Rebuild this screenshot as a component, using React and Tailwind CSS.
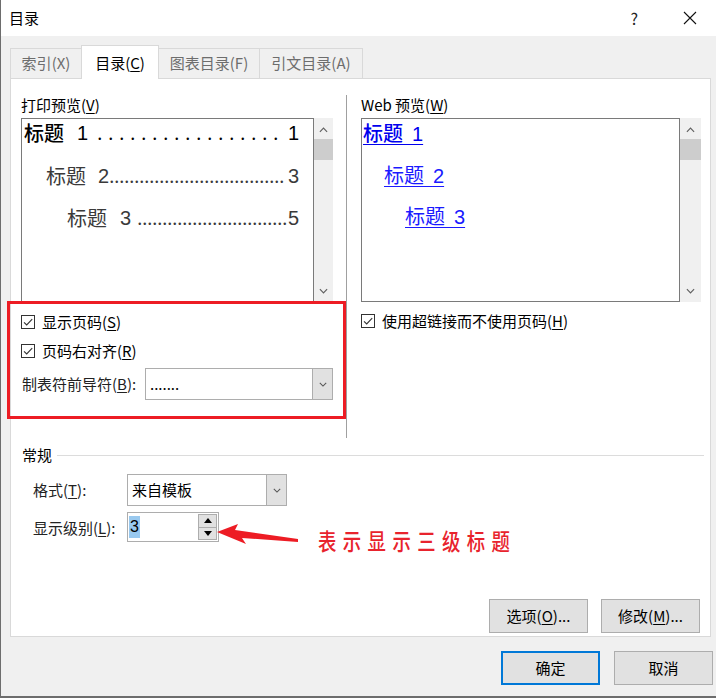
import React from 'react';

const ui = "font-['Microsoft_YaHei_UI','Noto_Sans_CJK_SC',sans-serif]";

function Check() {
    return (
        <span className="flex h-[14px] w-[14px] shrink-0 items-center justify-center border border-[#333] bg-white">
            <svg width="12" height="12" viewBox="0 0 12 12">
                <path d="M2 6.3 L4.7 9 L10.2 3.2" fill="none" stroke="#333" strokeWidth="1.1" />
            </svg>
        </span>
    );
}

function Chevron({ down, size = 9, color = '#606060' }) {
    return (
        <svg width={size} height={Math.round(size / 2) + 1} viewBox="0 0 10 6">
            <path d={down ? 'M1 1 L5 5 L9 1' : 'M1 5 L5 1 L9 5'} fill="none" stroke={color} strokeWidth="1.3" />
        </svg>
    );
}

function ScrollBar({ width }) {
    return (
        <div className={`flex h-[184px] ${width} flex-col items-center bg-[#f0f0f0]`}>
            <div className="flex h-[21px] items-center justify-center pt-[2px]">
                <Chevron />
            </div>
            <div className="h-[21px] w-full bg-[#cdcdcd]" />
            <div className="flex-1" />
            <div className="flex h-[21px] items-center justify-center pb-[1px]">
                <Chevron down />
            </div>
        </div>
    );
}

function Key({ children }) {
    return <span className="underline underline-offset-2">{children}</span>;
}

function Tab({ label, k, active, w }) {
    return active ? (
        <div className={`z-10 -mb-px flex h-[34px] ${w} items-center justify-center border border-b-0 border-[#d9d9d9] bg-white pt-[2px] text-[15px] text-black`}>
            {label}(<Key>{k}</Key>)
        </div>
    ) : (
        <div className={`-ml-px flex h-[30px] ${w} items-center justify-center border border-b-0 border-[#d9d9d9] bg-[#f0f0f0] text-[15px] text-[#6d6d6d] first:ml-0`}>
            {label}({k})
        </div>
    );
}

function Dropdown({ text, w }) {
    return (
        <div className={`flex h-[32px] ${w} border border-[#adadad] bg-white`}>
            <div className="flex flex-1 items-center pl-[4px] text-[15px] text-black">{text}</div>
            <div className="flex w-[20px] items-center justify-center border-l border-[#adadad] bg-[#e1e1e1]">
                <Chevron down size={8} color="#555" />
            </div>
        </div>
    );
}

function Btn({ children, primary }) {
    return (
        <button
            className={`flex h-[34px] w-[99px] items-center justify-center bg-[#e1e1e1] text-[15px] text-black ${
                primary ? 'border-2 border-[#0078d7]' : 'border border-[#adadad]'
            }`}
        >
            {children}
        </button>
    );
}

function TocRow({ pad, num, page, dots, bold, gap, dotsClass = '' }) {
    return (
        <div className={`flex h-[28px] items-center ${pad} pr-[14px] text-[20px] leading-[28px] ${bold ? 'text-black font-medium' : 'text-[#3a3a3a]'}`}>
            <span>标题</span>
            <span className={`${gap} font-['Liberation_Sans',sans-serif]`}>{num}</span>
            <span className={`whitespace-pre font-['Liberation_Serif',serif] ${dotsClass}`}>{dots}</span>
            <span className="flex-1" />
            <span className="font-['Liberation_Sans',sans-serif]">{page}</span>
        </div>
    );
}

function WebRow({ pad, num, bold }) {
    return (
        <div className={`flex h-[28px] items-center ${pad} text-[20px] leading-[28px]`}>
            <span className={`underline decoration-1 underline-offset-[3px] ${bold ? 'text-[#0000ee] font-medium' : 'text-[#1a1aff]'}`}>
                标题{'\u00a0\u00a0'}
                <span className="font-['Liberation_Sans',sans-serif]">{num}</span>
            </span>
        </div>
    );
}

export default function App() {
    return (
        <div className={`relative flex h-[698px] w-[716px] flex-col overflow-hidden border-b-2 border-l border-[#6d6d6d] bg-[#f0f0f0] ${ui}`}>
            {/* Title bar */}
            <div className="flex h-9 shrink-0 items-center bg-white pl-[8px] text-[15px] text-black">
                <span>目录</span>
                <span className="ml-auto mr-[45px] text-[16px] text-[#222]">?</span>
                <svg width="14" height="14" viewBox="0 0 14 14" className="mr-[19px]">
                    <path d="M1 1 L13 13 M13 1 L1 13" stroke="#111" strokeWidth="1.1" />
                </svg>
            </div>

            {/* Tabs */}
            <div className="flex h-[42px] shrink-0 items-end pl-[9px]">
                <Tab label="索引" k="X" w="w-[72px]" />
                <Tab label="目录" k="C" active w="w-[78px] -ml-px" />
                <Tab label="图表目录" k="F" w="w-[102px]" />
                <Tab label="引文目录" k="A" w="w-[104px]" />
            </div>

            {/* Panel */}
            <div className="ml-[9px] flex h-[559px] w-[701px] shrink-0 flex-col border border-[#d9d9d9] bg-white">
                <div className="flex h-[359px]">
                    {/* Print preview */}
                    <div className="w-[335px] pl-[10px] pt-[16px]">
                        <div className="h-5 text-[15px] leading-5 text-black">
                            打印预览(<Key>V</Key>)
                        </div>
                        <div className="mt-[3px] flex">
                            <div className="h-[184px] w-[293px] border border-[#7a7a7a] bg-white">
                                <TocRow
                                    pad="pl-[2px]"
                                    num="1"
                                    page="1"
                                    gap="ml-[13px] mr-[9px]"
                                    bold
                                    dotsClass="tracking-[0.5px] font-normal"
                                    dots={'. '.repeat(17)}
                                />
                                <div className="mt-[15px]">
                                    <TocRow pad="pl-[24px]" num="2" page="3" gap="ml-[12px]" dots={'.'.repeat(35)} />
                                </div>
                                <div className="mt-[14px]">
                                    <TocRow pad="pl-[45px]" num="3" page="5" gap="ml-[13px] mr-[6px]" dots={'.'.repeat(30)} />
                                </div>
                            </div>
                            <ScrollBar width="w-[19px]" />
                        </div>
                        <div className="mt-[10px] flex h-5 items-center gap-[7px] text-[15px] text-black">
                            <Check />
                            <span>
                                显示页码(<Key>S</Key>)
                            </span>
                        </div>
                        <div className="mt-[9px] flex h-5 items-center gap-[7px] text-[15px] text-black">
                            <Check />
                            <span>
                                页码右对齐(<Key>R</Key>)
                            </span>
                        </div>
                        <div className="mt-[7px] flex items-center text-[15px] text-[#222]">
                            <span className="w-[124px] pl-px">
                                制表符前导符(<Key>B</Key>):
                            </span>
                            <Dropdown text="......." w="w-[188px]" />
                        </div>
                    </div>

                    <div className="mt-[16px] h-[343px] w-px bg-[#a0a0a0]" />

                    {/* Web preview */}
                    <div className="pl-[14px] pt-[16px]">
                        <div className="h-5 text-[15px] leading-5 text-black">
                            Web 预览(<Key>W</Key>)
                        </div>
                        <div className="mt-[3px] flex">
                            <div className="h-[184px] w-[319px] border border-[#7a7a7a] bg-white">
                                <WebRow pad="pl-[1px]" num="1" bold />
                                <div className="mt-[14px]">
                                    <WebRow pad="pl-[22px]" num="2" />
                                </div>
                                <div className="mt-[13px]">
                                    <WebRow pad="pl-[43px]" num="3" />
                                </div>
                            </div>
                            <ScrollBar width="w-[21px]" />
                        </div>
                        <div className="mt-[9px] flex h-5 items-center gap-[7px] text-[15px] text-black">
                            <Check />
                            <span>
                                使用超链接而不使用页码(<Key>H</Key>)
                            </span>
                        </div>
                    </div>
                </div>

                {/* General */}
                <div className="mt-[7px] flex h-5 items-center pl-[11px] pr-[6px] text-[15px] text-black">
                    <span>常规</span>
                    <div className="ml-[5px] h-px flex-1 bg-[#dcdcdc]" />
                </div>
                <div className="mt-[9px] flex items-center pl-[22px] text-[15px] text-[#222]">
                    <span className="w-[94px]">
                        格式(<Key>T</Key>):
                    </span>
                    <Dropdown text="来自模板" w="w-[160px]" />
                </div>
                <div className="mt-[6px] flex items-start pl-[22px] text-[15px] text-[#222]">
                    <span className="mt-[5px] w-[94px]">
                        显示级别(<Key>L</Key>):
                    </span>
                    <div className="flex h-[30px] w-[92px] items-center border border-[#adadad] bg-white pl-[1px] pr-[1px]">
                        <span className="flex h-[22px] w-[11px] items-center justify-center bg-[#99c9ef] font-['Liberation_Sans',sans-serif] text-[16px] text-black">
                            3
                        </span>
                        <div className="ml-auto flex h-[26px] w-[19px] flex-col border border-[#adadad]">
                            <div className="flex flex-1 items-center justify-center border-b border-[#adadad] bg-[#e1e1e1]">
                                <svg width="8" height="5" viewBox="0 0 8 5">
                                    <path d="M0 5 L4 0 L8 5 Z" fill="#000" />
                                </svg>
                            </div>
                            <div className="flex flex-1 items-center justify-center bg-[#e1e1e1]">
                                <svg width="8" height="5" viewBox="0 0 8 5">
                                    <path d="M0 0 L4 5 L8 0 Z" fill="#000" />
                                </svg>
                            </div>
                        </div>
                    </div>
                    <svg width="86" height="30" viewBox="0 0 86 30" className="-ml-[4px] mt-[6px]">
                        <path d="M2 14 L23 6 L20 12 L83 21 L83 24 L27 20 L31 26 Z" fill="#ed1c24" />
                    </svg>
                    <span className="ml-[17px] mt-[14px] inline-block origin-left scale-x-[0.8] whitespace-nowrap text-[23px] font-medium leading-[28px] tracking-[8px] text-[#e8232d]">
                        表示显示三级标题
                    </span>
                </div>

                <div className="mt-[45px] flex justify-end gap-[13px] pr-[10px]">
                    <Btn>
                        选项(<Key>O</Key>)...
                    </Btn>
                    <Btn>
                        修改(<Key>M</Key>)...
                    </Btn>
                </div>
            </div>

            {/* Dialog buttons */}
            <div className="mt-[14px] flex justify-end gap-[14px] pr-[3px]">
                <Btn primary>确定</Btn>
                <Btn>取消</Btn>
            </div>

            {/* Annotation frame */}
            <div className="pointer-events-none absolute left-[6px] top-[301px] h-[118px] w-[339px] border-[3px] border-[#ed1c24]" />
        </div>
    );
}
